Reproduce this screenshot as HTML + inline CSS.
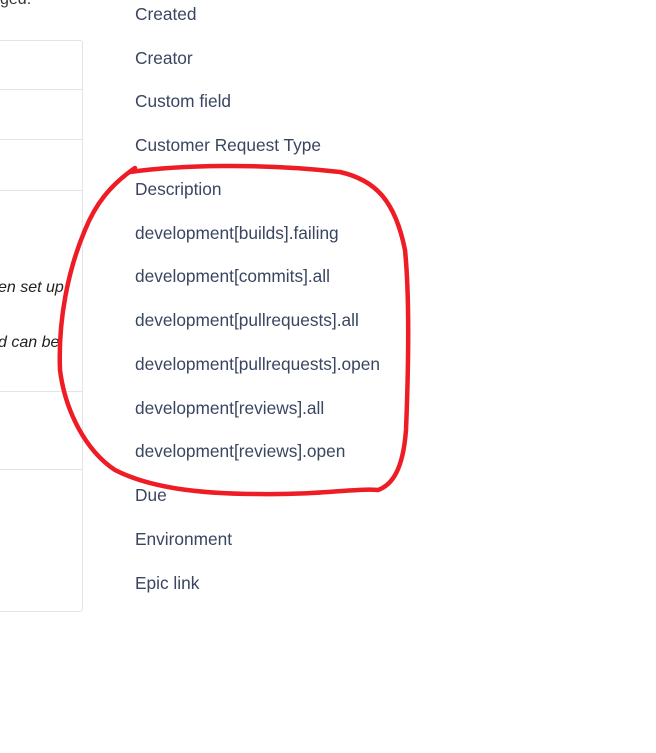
<!DOCTYPE html>
<html><head><style>
body{margin:0;width:656px;height:753px;background:#fff;position:relative;overflow:hidden;font-family:"Liberation Sans",sans-serif;}
.panel{position:absolute;left:-10px;top:40px;width:92px;height:570px;border:1px solid #e1e3e8;border-left:none;border-radius:0 3px 3px 0;}
.hl{position:absolute;left:0;width:83px;height:1px;background:#e1e3e8;}
.it{position:absolute;left:0;font-size:16px;font-style:italic;color:#222;}
.item{position:absolute;left:135px;font-size:17.3px;color:#3a4560;}
</style></head><body>
<div class="it" style="top:-9px;color:#333;font-style:normal">ged.</div>
<div class="panel"></div>
<div class="hl" style="top:89px"></div>
<div class="hl" style="top:139px"></div>
<div class="hl" style="top:190px"></div>
<div class="hl" style="top:391px"></div>
<div class="hl" style="top:469px"></div>
<div class="it" style="top:279px;left:-2px">en set up</div>
<div class="it" style="top:334px;left:-2px">d can be</div>
<div class="item" style="top:4px">Created</div>
<div class="item" style="top:48px">Creator</div>
<div class="item" style="top:91px">Custom field</div>
<div class="item" style="top:135px">Customer Request Type</div>
<div class="item" style="top:179px">Description</div>
<div class="item" style="top:223px">development[builds].failing</div>
<div class="item" style="top:266px">development[commits].all</div>
<div class="item" style="top:310px">development[pullrequests].all</div>
<div class="item" style="top:354px">development[pullrequests].open</div>
<div class="item" style="top:398px">development[reviews].all</div>
<div class="item" style="top:441px">development[reviews].open</div>
<div class="item" style="top:485px">Due</div>
<div class="item" style="top:529px">Environment</div>
<div class="item" style="top:573px">Epic link</div>
<svg style="position:absolute;left:0;top:0" width="656" height="753">
<path d="M130,172 C180,165 260,163 340,172 C375,180 395,200 405,250 C410,300 408,380 406,430 C403,470 392,485 378,490 C355,488 320,495 260,494 C200,494 150,488 115,470 C85,450 65,410 60,370 C58,320 68,270 85,230 C95,205 110,185 135,168" fill="none" stroke="#ee1c25" stroke-width="4.5" stroke-linecap="round"/>
</svg>
</body></html>
